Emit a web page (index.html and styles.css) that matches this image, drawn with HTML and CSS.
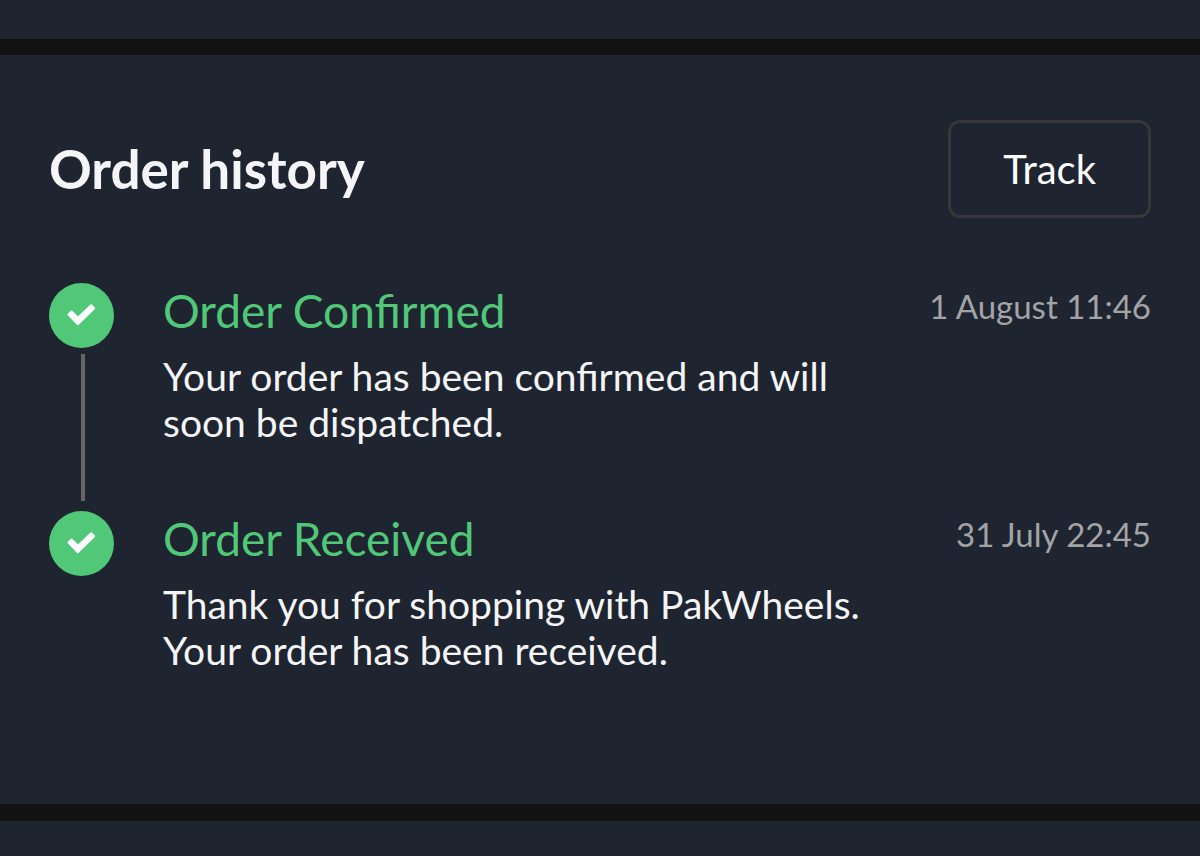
FILE: index.html
```html
<!DOCTYPE html>
<html lang="en">
<head>
<meta charset="utf-8">
<title>Order history</title>
<link rel="stylesheet" href="styles.css">
</head>
<body>
<main class="page">
  <section class="order-history">
    <header class="header">
      <h1 class="title">Order history</h1>
      <button class="track" type="button">Track</button>
    </header>
    <ol class="timeline">
      <li class="event">
        <div class="rail">
          <svg class="badge" viewBox="0 0 65 65" aria-hidden="true"><circle cx="32.500" cy="32.500" r="32.500"/><path d="M19.500 31.500L22.500 28.500L29 34.800L42.200 22.200L45.200 25.200L28.800 41.300Z"/></svg>
          <span class="line"></span>
        </div>
        <div class="details">
          <h2 class="status">Order Confirmed</h2>
          <p class="message">Your order has been confirmed and will soon be dispatched.</p>
        </div>
        <time class="time">1 August 11:46</time>
      </li>
      <li class="event">
        <div class="rail">
          <svg class="badge" viewBox="0 0 65 65" aria-hidden="true"><circle cx="32.500" cy="32.500" r="32.500"/><path d="M19.500 31.500L22.500 28.500L29 34.800L42.200 22.200L45.200 25.200L28.800 41.300Z"/></svg>
        </div>
        <div class="details">
          <h2 class="status">Order Received</h2>
          <p class="message">Thank you for shopping with PakWheels. Your order has been received.</p>
        </div>
        <time class="time">31 July 22:45</time>
      </li>
    </ol>
  </section>
</main>
</body>
</html>
```
FILE: styles.css
```css
* { box-sizing: border-box; }
body {
  margin: 0;
  background: #1e2530;
  color: #f5f5f7;
  font-family: Lato, "Liberation Sans", sans-serif;
}
.page { padding: 39px 0 35px; }
.order-history {
  padding: 65px 49px 131px;
  border-top: 16px solid #121212;
  border-bottom: 17px solid #121212;
}
.header {
  display: flex;
  align-items: center;
  justify-content: space-between;
  margin-bottom: 65px;
}
.title { margin: 0; font-size: 53px; line-height: 64px; font-weight: 700; }
.track {
  padding: 22px 52px;
  border: 3px solid #363738;
  border-radius: 12px;
  background: transparent;
  color: #fff;
  font: 400 40px/48px Lato, "Liberation Sans", sans-serif;
}
.timeline { margin: 0; padding: 0; list-style: none; }
.event { display: flex; }
.rail {
  display: flex;
  flex-direction: column;
  gap: 6px;
  width: 65px;
  margin-right: 49px;
}
.badge { display: block; width: 65px; height: 65px; fill: #50c878; }
.badge path { fill: #fff; stroke: #fff; stroke-width: 2; stroke-linejoin: round; }
.line { width: 4px; flex: 1; margin: 0 0 10px 32px; background: #666; }
.details { flex: 1; max-width: 720px; padding-bottom: 66px; }
.event:last-child .details { padding-bottom: 0; }
.status {
  margin: 0 0 14px;
  color: #50c878;
  font-size: 46px;
  line-height: 56px;
  font-weight: 400;
}
.message { margin: 0; font-size: 39px; line-height: 46px; }
.time {
  margin-left: auto;
  color: #a3a4a7;
  font-size: 33px;
  line-height: 46px;
  white-space: nowrap;
}
```
